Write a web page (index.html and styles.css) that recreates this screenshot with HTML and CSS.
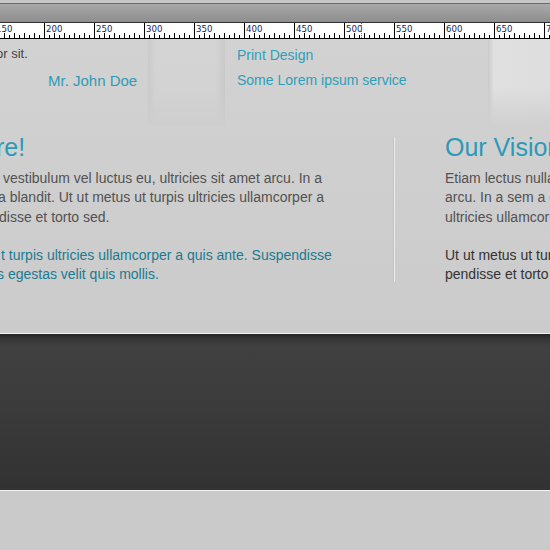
FILE: index.html
```html
<!DOCTYPE html>
<html>
<head>
<meta charset="utf-8">
<title>Page</title>
<link rel="stylesheet" href="styles.css">
</head>
<body>
<div class="page">
  <div class="topstrip"></div>
  <div class="titlebar"></div>
  <div class="ruler">
    <div class="seg first"><span>150</span></div>
    <div class="seg"><span>200</span></div>
    <div class="seg"><span>250</span></div>
    <div class="seg"><span>300</span></div>
    <div class="seg"><span>350</span></div>
    <div class="seg"><span>400</span></div>
    <div class="seg"><span>450</span></div>
    <div class="seg"><span>500</span></div>
    <div class="seg"><span>550</span></div>
    <div class="seg"><span>600</span></div>
    <div class="seg"><span>650</span></div>
    <div class="seg"><span>700</span></div>
    <div class="cursor"></div>
  </div>
  <div class="content">
    <div class="toprow">
      <div class="cell c1">
        <p class="quote">or sit.</p>
        <p class="author">Mr. John Doe</p>
      </div>
      <div class="cell c2"></div>
      <div class="cell c3">
        <a class="link" href="#">Print Design</a>
        <a class="link" href="#">Some Lorem ipsum service</a>
      </div>
      <div class="cell c4"></div>
    </div>
    <div class="midrow">
      <div class="col-left">
        <h2 class="heading ih">re!</h2>
        <p class="para">
          <span class="line i1">vestibulum vel luctus eu, ultricies sit amet arcu. In a</span>
          <span class="line i2">a blandit. Ut ut metus ut turpis ultricies ullamcorper a</span>
          <span class="line i3">disse et torto sed.</span>
        </p>
        <p class="para accent">
          <span class="line i4">t turpis ultricies ullamcorper a quis ante. Suspendisse</span>
          <span class="line i5">s egestas velit quis mollis.</span>
        </p>
      </div>
      <div class="divider"></div>
      <div class="col-right">
        <h2 class="heading">Our Vision</h2>
        <p class="para">
          <span class="line">Etiam lectus nulla, vestibulum vel luctus eu, ultricies sit amet</span>
          <span class="line">arcu. In a sem a dui blandit. Ut ut metus ut turpis</span>
          <span class="line">ultricies ullamcorper a quis ante.</span>
        </p>
        <p class="para dark">
          <span class="line">Ut ut metus ut turpis ultricies ullamcorper a quis ante. Sus-</span>
          <span class="line">pendisse et torto sed.</span>
        </p>
      </div>
    </div>
  </div>
  <div class="band"></div>
  <div class="bottom"></div>
</div>
</body>
</html>
```
FILE: styles.css
```css
html, body {
  margin: 0;
  padding: 0;
}
body {
  width: 550px;
  height: 550px;
  overflow: hidden;
  background: #cacaca;
  font-family: "Liberation Sans", Arial, sans-serif;
}
.page {
  width: 550px;
  overflow: hidden;
}

/* window chrome */
.topstrip {
  height: 3px;
  background: #c8c8c8;
}
.titlebar {
  height: 18px;
  border-top: 1px solid #6a6a6a;
  border-bottom: 1px solid #2f2f2f;
  background: linear-gradient(#a9a9a9, #8d8d8d);
}

/* ruler */
.ruler {
  position: relative;
  display: flex;
  height: 15px;
  background: #fff;
  border-bottom: 1px solid #000;
  overflow: hidden;
}
.seg {
  flex: 0 0 50px;
  box-sizing: border-box;
  border-left: 1px solid #000;
  background-image:
    repeating-linear-gradient(90deg, #000 0 1px, transparent 1px 5px),
    repeating-linear-gradient(90deg, #000 0 1px, transparent 1px 10px);
  background-origin: border-box;
  background-repeat: no-repeat;
  background-position: left bottom, left bottom;
  background-size: 100% 3px, 100% 5px;
}
.seg.first {
  margin-left: -6px;
}
.seg span {
  display: block;
  padding: 1px 0 0 1px;
  font-family: "DejaVu Sans", sans-serif;
  font-size: 8.6px;
  line-height: 10px;
  color: #0f1f5c;
}
.cursor {
  position: absolute;
  left: 361px;
  top: 0;
  bottom: 0;
  border-left: 1px dotted #666;
}

/* content */
.content {
  background: linear-gradient(#d2d2d2, #cbcbcb);
}
.toprow {
  display: flex;
  height: 86px;
}
.cell {
  box-sizing: border-box;
}
.c1 {
  flex: 0 0 148px;
}
.c2 {
  flex: 0 0 77px;
  background:
    linear-gradient(to bottom, rgba(206,206,206,0) 60%, rgba(206,206,206,1)),
    linear-gradient(to right, rgba(0,0,0,0.035), rgba(255,255,255,0.05) 8px, rgba(255,255,255,0.05) 68px, rgba(0,0,0,0.045));
}
.c3 {
  flex: 0 0 263px;
  display: flex;
  flex-direction: column;
  padding: 4px 0 0 12px;
}
.c4 {
  flex: 1;
  background:
    linear-gradient(to bottom, rgba(210,210,210,0) 55%, rgba(208,208,208,1)),
    linear-gradient(to right, rgba(0,0,0,0.03), #e0e0e0 6px, #dedede);
}
.quote {
  margin: 0;
  padding-top: 7px;
  font-size: 13px;
  line-height: 16px;
  color: #444;
  text-indent: -4px;
  white-space: nowrap;
}
.author {
  margin: 9.5px 0 0;
  padding-left: 48px;
  font-size: 15px;
  line-height: 18px;
  color: #2e9bb6;
  white-space: nowrap;
}
.link {
  font-size: 14px;
  line-height: 25px;
  color: #2e9fba;
  text-decoration: none;
  white-space: nowrap;
}

.midrow {
  display: flex;
  height: 208px;
}
.col-left {
  flex: 0 0 402px;
  margin-left: -8px;
  padding-top: 7px;
  overflow: hidden;
}
.heading {
  margin: 0 0 7px;
  font-size: 25px;
  line-height: 30px;
  font-weight: normal;
  color: #2b9ab7;
  white-space: nowrap;
}
.para {
  margin: 0 0 19.3px;
  font-size: 14px;
  line-height: 19.3px;
  color: #525252;
}
.para.accent {
  color: #1a7b91;
}
.para.dark {
  color: #333;
}
.line {
  display: block;
  white-space: nowrap;
}
.ih { padding-left: 4px; }
.i1 { padding-left: 11px; }
.i2 { padding-left: 6px; }
.i3 { padding-left: 7px; }
.i4 { padding-left: 9px; }
.i5 { padding-left: 5px; }

.divider {
  flex: 0 0 1px;
  height: 145px;
  margin-top: 12px;
  background: #ececec;
  box-shadow: -1px 0 0 #c3c3c3;
}
.col-right {
  margin-left: 50px;
  padding-top: 7px;
  white-space: nowrap;
}

/* dark band */
.band {
  height: 156px;
  border-top: 1px solid #f2f2f2;
  border-bottom: 1px solid #f2f2f2;
  background: linear-gradient(to bottom, #232323 0, #383838 6px, #404040 12px, #3d3d3d 35%, #323232 100%);
}
.bottom {
  height: 59px;
  background: #cacaca;
}
```
